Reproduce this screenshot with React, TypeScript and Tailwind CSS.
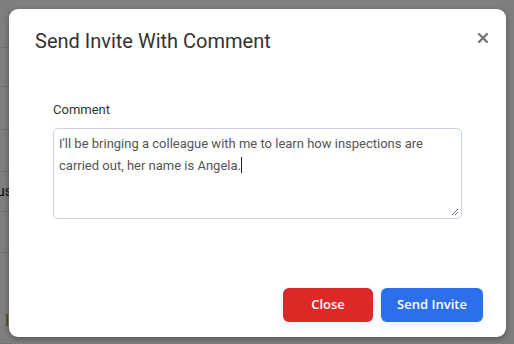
import { X } from "lucide-react";

const ROWS = [
  { h: 48, text: "" },
  { h: 39, text: "" },
  { h: 43, text: "" },
  { h: 42, text: "" },
  { h: 40, text: "us", tone: "text-[#111]" },
  { h: 41, text: "l", tone: "text-[#0a4fb0]" },
  { h: 91, text: "" },
];

export default function App() {
  return (
    <div className="relative w-[514px] h-[344px] overflow-hidden bg-white font-['Roboto',sans-serif]">
      {/* page behind the modal */}
      <div className="flex flex-col">
        {ROWS.map((r, i) => (
          <div
            key={i}
            style={{ height: r.h }}
            className="flex items-center justify-end border-b border-[#dfe2e6] w-[120px] -ml-[108px] text-[14px]"
          >
            <span className={r.tone}>{r.text}</span>
          </div>
        ))}
      </div>
      <div className="absolute left-[6px] top-[314px] w-[2px] h-[12px] bg-[#c8a060]" />
      <div className="absolute inset-0 bg-black/50" />

      {/* modal */}
      <div className="absolute left-[9px] top-[9px] w-[497px] h-[328px] bg-white rounded-[9px] shadow-[0_2px_6px_rgba(0,0,0,0.35)] flex flex-col">
        <div className="flex items-start justify-between pl-[26px] pr-[15px] pt-[20px]">
          <h2 className="text-[20px] leading-[24px] text-[#333] font-normal">Send Invite With Comment</h2>
          <X className="w-[16px] h-[16px] mt-[1px] text-[#777]" strokeWidth={3.6} />
        </div>

        <div className="px-[44px] pt-[49px]">
          <label className="block text-[13px] leading-[16px] text-[#333] mb-[10px]">Comment</label>
          <div className="relative h-[91px] rounded-[5px] border border-[#c9d3e2] px-[5px] pt-[4px] text-[13px] leading-[22px] text-[#555] pr-[30px]">
            I'll be bringing a colleague with me to learn how inspections are carried out, her name is Angela.
            <span className="inline-block w-px h-[16px] bg-[#222] align-[-3px]" />
            <svg className="absolute right-[2px] bottom-[2px]" width="8" height="8" viewBox="0 0 8 8">
              <path d="M1 7L7 1M4 7L7 4" stroke="#777" strokeWidth="1" />
            </svg>
          </div>
        </div>

        <div className="mt-auto flex justify-end gap-[8px] pr-[23px] pb-[15px]">
          <button className="w-[90px] h-[34px] rounded-[6px] bg-[#dd2828] text-white text-[13px] font-semibold font-['Open_Sans',sans-serif] shadow-[0_3px_10px_rgba(80,110,220,0.12)]">
            Close
          </button>
          <button className="w-[102px] h-[34px] rounded-[6px] bg-[#2b70ea] text-white text-[13px] font-semibold font-['Open_Sans',sans-serif] shadow-[0_3px_10px_rgba(80,110,220,0.12)]">
            Send Invite
          </button>
        </div>
      </div>
    </div>
  );
}
